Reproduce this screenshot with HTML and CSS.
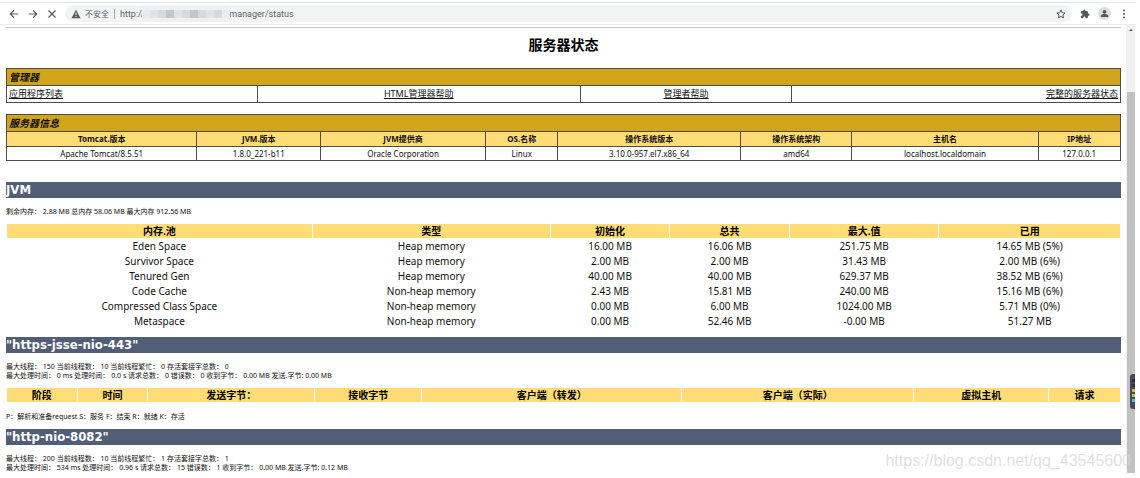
FILE: index.html
```html
<!DOCTYPE html>
<html lang="zh-CN">
<head>
<meta charset="utf-8">
<title>服务器状态</title>
<link rel="stylesheet" href="styles.css">
</head>
<body>
<div class="browser">
  <header class="toolbar">
    <div class="nav">
      <button class="icon-btn" type="button" aria-label="后退"><svg viewBox="0 0 10 10"><path d="M9.2 5H1.4M4.9 1.4 1.3 5l3.6 3.6"/></svg></button>
      <button class="icon-btn" type="button" aria-label="前进"><svg viewBox="0 0 10 10"><path d="M.8 5h7.8M5.1 1.4 8.700 5 5.1 8.6"/></svg></button>
      <button class="icon-btn" type="button" aria-label="停止"><svg viewBox="0 0 10 10"><path d="m1.5 1.5 7 7m0-7-7 7"/></svg></button>
    </div>
    <div class="omnibox">
      <svg class="warn" viewBox="0 0 10 10"><path d="M5 .8 9.5 9.2H.5z" fill="#54585d"/><path d="M5 3.6v2.6M5 7v1.1" stroke="#fff" stroke-width="1"/></svg>
      <label class="security" for="url">不安全</label>
      <span class="divider"></span>
      <div class="address">
        <input id="url" class="url" type="text" value="http://                                      manager/status">
        <span class="mosaic"><i class="m0"></i><i class="m1"></i><i class="m2"></i><i class="m3"></i><i class="m1"></i><i class="m2"></i><i class="m3"></i><i class="m2"></i><i class="m1"></i><i class="m2"></i><i class="m4"></i></span>
      </div>
      <button class="icon-btn star" type="button" aria-label="收藏"><svg viewBox="0 0 10 10"><path d="m5 1 1.2 2.7 2.9.3-2.2 2 .6 2.9L5 7.4 2.5 8.9 3.1 6 .9 4l2.9-.3z"/></svg></button>
    </div>
    <div class="actions">
      <button class="icon-btn" type="button" aria-label="扩展程序"><svg class="solid" viewBox="0 0 24 24"><path d="M20.5 11H19V7c0-1.1-.9-2-2-2h-4V3.500a2.500 2.500 0 0 0-5 0V5H4c-1.100 0-2 .900-2 2v3.800h1.500a2.700 2.700 0 0 1 0 5.400H2V20c0 1.100.900 2 2 2h3.800v-1.500a2.700 2.700 0 0 1 5.400 0V22H17c1.100 0 2-.900 2-2v-4h1.500a2.500 2.500 0 0 0 0-5z"/></svg></button>
      <button class="icon-btn avatar" type="button" aria-label="用户"><svg class="solid" viewBox="0 0 24 24"><circle cx="12" cy="7.500" r="5"/><path d="M2 21v-2.500c0-3.300 6.500-5 10-5s10 1.700 10 5V21z"/></svg></button>
      <button class="icon-btn" type="button" aria-label="菜单"><svg class="solid" viewBox="0 0 10 10"><circle cx="5" cy="1.500" r="1"/><circle cx="5" cy="5" r="1"/><circle cx="5" cy="8.500" r="1"/></svg></button>
    </div>
  </header>

  <div class="viewport">
    <main class="page">
      <h1 class="title">服务器状态</h1>

      <table class="grid links">
        <colgroup><col class="l1"><col class="l2"><col class="l3"><col class="l4"></colgroup>
        <tr><th class="caption" colspan="4">管理器</th></tr>
        <tr>
          <td class="start"><a href="#list">应用程序列表</a></td>
          <td><a href="#html-help">HTML管理器帮助</a></td>
          <td><a href="#help">管理者帮助</a></td>
          <td class="end"><a href="#all">完整的服务器状态</a></td>
        </tr>
      </table>

      <table class="grid info">
        <colgroup><col class="s1"><col class="s2"><col class="s3"><col class="s4"><col class="s5"><col class="s6"><col class="s7"><col class="s8"></colgroup>
        <tr><th class="caption" colspan="8">服务器信息</th></tr>
        <tr><th>Tomcat.版本</th><th>JVM.版本</th><th>JVM提供商</th><th>OS.名称</th><th>操作系统版本</th><th>操作系统架构</th><th>主机名</th><th>IP地址</th></tr>
        <tr><td>Apache Tomcat/8.5.51</td><td>1.8.0_221-b11</td><td>Oracle Corporation</td><td>Linux</td><td>3.10.0-957.el7.x86_64</td><td>amd64</td><td>localhost.localdomain</td><td>127.0.0.1</td></tr>
      </table>

      <h2 class="band">JVM</h2>
      <p class="note">剩余内存： 2.88 MB 总内存 58.06 MB 最大内存 912.56 MB</p>
      <table class="data">
        <colgroup><col class="p1"><col class="p2"><col class="p3"><col class="p4"><col class="p5"><col class="p6"></colgroup>
        <tr><th>内存.池</th><th>类型</th><th>初始化</th><th>总共</th><th>最大.值</th><th>已用</th></tr>
        <tr><td>Eden Space</td><td>Heap memory</td><td>16.00 MB</td><td>16.06 MB</td><td>251.75 MB</td><td>14.65 MB (5%)</td></tr>
        <tr><td>Survivor Space</td><td>Heap memory</td><td>2.00 MB</td><td>2.00 MB</td><td>31.43 MB</td><td>2.00 MB (6%)</td></tr>
        <tr><td>Tenured Gen</td><td>Heap memory</td><td>40.00 MB</td><td>40.00 MB</td><td>629.37 MB</td><td>38.52 MB (6%)</td></tr>
        <tr><td>Code Cache</td><td>Non-heap memory</td><td>2.43 MB</td><td>15.81 MB</td><td>240.00 MB</td><td>15.16 MB (6%)</td></tr>
        <tr><td>Compressed Class Space</td><td>Non-heap memory</td><td>0.00 MB</td><td>6.00 MB</td><td>1024.00 MB</td><td>5.71 MB (0%)</td></tr>
        <tr><td>Metaspace</td><td>Non-heap memory</td><td>0.00 MB</td><td>52.46 MB</td><td>-0.00 MB</td><td>51.27 MB</td></tr>
      </table>

      <h2 class="band connector">"https-jsse-nio-443"</h2>
      <p class="note">最大线程： 150 当前线程数： 10 当前线程繁忙： 0 存活套接字总数： 0<br>最大处理时间： 0 ms 处理时间： 0.0 s 请求总数： 0 错误数： 0 收到字节： 0.00 MB 发送.字节: 0.00 MB</p>
      <table class="data">
        <colgroup><col class="c1"><col class="c2"><col class="c3"><col class="c4"><col class="c5"><col class="c6"><col class="c7"><col class="c8"></colgroup>
        <tr><th>阶段</th><th>时间</th><th>发送字节：</th><th>接收字节</th><th>客户端（转发）</th><th>客户端（实际）</th><th>虚拟主机</th><th>请求</th></tr>
      </table>
      <p class="note">P：解析和准备request S：服务 F：结束 R：就绪 K：存活</p>

      <h2 class="band connector">"http-nio-8082"</h2>
      <p class="note">最大线程： 200 当前线程数： 10 当前线程繁忙： 1 存活套接字总数： 1<br>最大处理时间： 534 ms 处理时间： 0.96 s 请求总数： 15 错误数： 1 收到字节： 0.00 MB 发送.字节: 0.12 MB</p>
    </main>
    <div class="scrollbar"><span class="arrow"></span><span class="thumb"></span></div>
    <div class="meter"><i class="k1"></i><i class="k2"></i><i class="k3"></i><i class="k4"></i><i class="k5"></i></div>
    <div class="watermark">https://blog.csdn.net/qq_43545600</div>
  </div>
</div>
</body>
</html>
```
FILE: styles.css
```css
* { box-sizing: border-box; }

body {
  margin: 0;
  background: #fff;
  color: #111;
  font-family: "Noto Sans", "Noto Sans CJK SC", sans-serif;
  font-size: 10px;
}

.browser { margin: 0 5px 5px 0; padding-top: 2px; }

/* Toolbar */
.toolbar {
  display: flex;
  align-items: center;
  height: 23px;
  padding-left: 9px;
  border-top: 1px solid #dfe6ec;
  border-bottom: 1px solid #ececec;
}
.nav { display: flex; gap: 9px; width: 56px; }
.icon-btn {
  display: flex;
  align-items: center;
  justify-content: center;
  flex: none;
  width: 10px;
  height: 10px;
  padding: 0;
  border: 0;
  background: none;
}
.icon-btn svg { width: 10px; height: 10px; fill: none; stroke: #54585d; stroke-width: 1.2; }
.icon-btn svg.solid { fill: #54585d; stroke: none; }
.omnibox {
  display: flex;
  align-items: center;
  flex: 1;
  height: 17px;
  padding: 0 6px;
  border-radius: 9px;
  background: #f1f3f4;
}
.warn { width: 10px; height: 10px; }
.security { margin-left: 4px; color: #5f6368; font-size: 8px; line-height: 16px; }
.divider { width: 1px; height: 10px; margin: 0 5px; background: #a8abae; }
.address { position: relative; flex: 1; display: flex; }
.url {
  width: 100%;
  height: 16px;
  padding: 0;
  border: 0;
  outline: 0;
  background: none;
  color: #5f6368;
  font-family: Roboto, sans-serif;
  font-size: 9px;
}
.mosaic {
  position: absolute;
  top: 0;
  left: 22px;
  display: flex;
  align-items: center;
  width: 88px;
  height: 16px;
  background: #eef0f2;
}
.mosaic i { width: 8px; height: 8px; }
.mosaic .m0 { background: #e9ebee; }
.mosaic .m1 { background: #e1e3e7; }
.mosaic .m2 { background: #d6d9dd; }
.mosaic .m3 { background: #c2c6cd; }
.mosaic .m4 { background: #eaecef; }
.star svg { stroke-width: 1; }
.actions { display: flex; align-items: center; gap: 8px; padding: 0 6px 0 8px; }
.avatar { width: 13px; height: 13px; border-radius: 50%; background: #dadde3; }
.avatar svg { width: 9px; height: 9px; }

/* Page */
.viewport { position: relative; display: flex; }
.page { flex: 1; padding: 2px 5px 1px 6px; }
.title {
  margin: 0 0 13px;
  padding-top: 7px;
  border-top: 1px solid #c8c8c8;
  color: #000;
  font-size: 14px;
  line-height: 20px;
  text-align: center;
}

table { width: 100%; table-layout: fixed; text-align: center; }
th, td { padding: 0; }

.grid { border-collapse: collapse; }
.grid th, .grid td { border: 1px solid #4c4c4c; }
.grid th { background: #ffdc75; font-size: 8px; line-height: 14px; }
.grid td { font-size: 8px; line-height: 13px; }
.grid .caption {
  padding-left: 2px;
  background: #d2a41c;
  font-size: 10px;
  line-height: 16px;
  font-style: italic;
  text-align: left;
}
.grid a { color: #111; }
.links { margin-bottom: 11px; }
.links td { padding: 0 2px; font-size: 9px; line-height: 16px; }
.links .start { text-align: left; }
.links .end { text-align: right; }

.band {
  margin: 21px 0 0;
  background: #525d76;
  color: #fff;
  font-family: "DejaVu Sans Condensed", "DejaVu Sans", sans-serif;
  font-size: 13px;
  line-height: 16px;
}
.connector { margin-top: 8px; }
.note { margin: 9px 0 7px; font-size: 7px; line-height: 9px; }
.note:last-child { margin-bottom: 0; }

.data { border-spacing: 1px; }
.data th { background: #ffdc75; color: #000; font-size: 10px; line-height: 14px; }
.data td { font-size: 10px; line-height: 14px; }

.l1 { width: 22.5%; } .l2 { width: 29%; } .l3 { width: 19%; } .l4 { width: 29.5%; }
.s1 { width: 17.1%; } .s2 { width: 11.1%; } .s3 { width: 14.8%; } .s4 { width: 6.5%; }
.s5 { width: 16.4%; } .s6 { width: 10%; } .s7 { width: 16.7%; } .s8 { width: 7.4%; }
.p1 { width: 27.5%; } .p2 { width: 21.4%; } .p3 { width: 10.7%; } .p4 { width: 10.7%; }
.p5 { width: 13.4%; } .p6 { width: 16.3%; }
.c1 { width: 6.3%; } .c2 { width: 6.3%; } .c3 { width: 15%; } .c4 { width: 9.6%; }
.c5 { width: 23.4%; } .c6 { width: 20.9%; } .c7 { width: 12.1%; } .c8 { width: 6.4%; }

/* Scrollbar and overlays */
.scrollbar {
  display: flex;
  flex-direction: column;
  align-items: center;
  width: 9px;
  padding-top: 4px;
  background: #f1f1f1;
}
.arrow { border: 2px solid transparent; border-top: 0; border-bottom: 2px solid #505050; }
.thumb { flex: 1; width: 8px; margin-top: 61px; background: #c1c1c1; }
.meter {
  position: absolute;
  right: 0;
  bottom: 64px;
  display: flex;
  flex-direction: column;
  gap: 2px;
  width: 5px;
  height: 35px;
  padding: 5px 0 0 2px;
  border-radius: 3px 0 0 3px;
  background: #474a57;
}
.meter i { height: 3px; }
.meter .k1, .meter .k2 { background: #2b3040; }
.meter .k3 { background: #c9b93c; }
.meter .k4 { background: #9ad04c; }
.meter .k5 { background: #45c9b0; }
.watermark {
  position: absolute;
  right: 4px;
  bottom: 3px;
  color: rgba(215, 215, 215, .8);
  font-family: "Liberation Sans", sans-serif;
  font-size: 16px;
  line-height: 18px;
}
```
